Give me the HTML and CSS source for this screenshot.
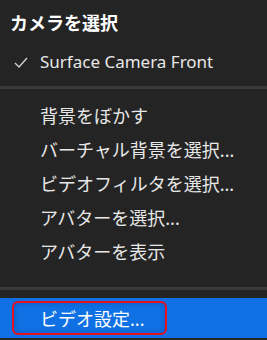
FILE: index.html
```html
<!DOCTYPE html>
<html lang="ja">
<head>
  <meta charset="UTF-8" />
  <title>カメラメニュー</title>
  <link rel="stylesheet" href="styles.css">
</head>
<body>
  <div class="menu">
    <div class="menu-title">カメラを選択</div>
    <div class="menu-item checked">
      <svg class="check" width="14" height="11" viewBox="0 0 14 11">
        <path d="M1 6 L5 10 L13 1" fill="none" stroke="#d0d0d0" stroke-width="1.4"/>
      </svg>
      Surface Camera Front
    </div>

    <div class="separator"></div>

    <div class="menu-item">背景をぼかす</div>
    <div class="menu-item">バーチャル背景を選択...</div>
    <div class="menu-item">ビデオフィルタを選択...</div>
    <div class="menu-item">アバターを選択...</div>
    <div class="menu-item">アバターを表示</div>

    <div class="separator bottom"></div>

    <div class="menu-item active">
      <span class="focus-box">ビデオ設定...</span>
    </div>
  </div>
</body>
</html>
```

FILE: styles.css
```css
body {
  margin: 0;
  background: #242424;
  font-family: 'Noto Sans', 'Noto Sans CJK JP', sans-serif;
  color: #e8e8e8;
}

.menu {
  display: flex;
  flex-direction: column;
  height: 340px;
}

.menu-title {
  height: 42px;
  line-height: 42px;
  padding: 2px 0 0 10px;
  font-size: 18px;
  font-weight: 700;
  color: #fff;
}

.menu-item {
  height: 34px;
  line-height: 34px;
  padding-left: 40px;
  font-size: 18px;
  position: relative;
}

.menu-item.checked {
  height: 36px;
  line-height: 36px;
  font-size: 17px;
}

.check {
  position: absolute;
  left: 14px;
  top: 13px;
}

.separator {
  height: 3px;
  background: #3a3a3a;
  margin: 6px 0 10px;
}

.separator.bottom {
  margin: 18px 0 8px;
}

.menu-item.active {
  height: 40px;
  line-height: normal;
  padding: 3px 100px 3px 12px;
  background: #1071e5;
  box-sizing: border-box;
  display: flex;
}

.focus-box {
  flex: 1;
  display: flex;
  align-items: center;
  padding-left: 26px;
  border: 2px solid #e8101e;
  border-radius: 6px;
  box-shadow: inset 0 0 6px rgba(0, 40, 120, 0.35);
  color: #fff;
}
```
